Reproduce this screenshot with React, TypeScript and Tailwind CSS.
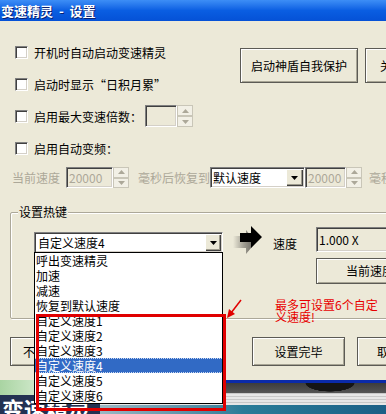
import React from 'react';

const sunken =
  'border border-t-[#808080] border-l-[#808080] border-b-white border-r-white shadow-[inset_1px_1px_0_#404040,inset_-1px_-1px_0_#d4d0c8]';
const raised =
  'bg-[#ECE9D8] shadow-[inset_1px_1px_0_#ffffff,inset_-1px_-1px_0_#404040,inset_-2px_-2px_0_#9d9a8c]';

function Check({ label, children }: { label: string; children?: React.ReactNode }) {
  return (
    <div className="flex h-[32px] items-center ml-[5px]">
      <span className={`h-[13px] w-[13px] shrink-0 bg-white ${sunken}`} />
      <span className="ml-[6px] text-[12px] leading-[15px] whitespace-nowrap">{label}</span>
      {children}
    </div>
  );
}

function Tri({ up, grey }: { up?: boolean; grey?: boolean }) {
  return (
    <svg width="7" height="4" viewBox="0 0 7 4">
      <polygon points={up ? '3.5,0 7,4 0,4' : '0,0 7,0 3.5,4'} fill={grey ? '#aca899' : '#000'} />
    </svg>
  );
}

function Spin() {
  return (
    <div className="flex h-full w-[16px] flex-col">
      <div className="flex flex-1 items-center justify-center border border-[#c9c6b8] bg-[#f2f0e6]">
        <Tri up grey />
      </div>
      <div className="flex flex-1 items-center justify-center border border-[#c9c6b8] bg-[#f2f0e6]">
        <Tri grey />
      </div>
    </div>
  );
}

function DropBtn({ w }: { w: string }) {
  return (
    <div className={`flex h-full ${w} items-center justify-center ${raised}`}>
      <Tri />
    </div>
  );
}

function Button({ text, cls }: { text: string; cls: string }) {
  return (
    <div
      className={`flex items-center justify-center border border-[#5c5b55] bg-[#ECE9D8] shadow-[inset_1px_1px_0_#ffffff,inset_-1px_-1px_0_#a8a595] text-[12px] whitespace-nowrap ${cls}`}
    >
      {text}
    </div>
  );
}

const items = ['呼出变速精灵', '加速', '减速', '恢复到默认速度', '自定义速度1', '自定义速度2', '自定义速度3', '自定义速度4', '自定义速度5', '自定义速度6'];

export default function App() {
  return (
    <div className="relative h-[414px] w-[386px] overflow-hidden bg-[#ECE9D8] font-['Noto_Sans_CJK_SC','Noto_Sans',sans-serif] text-black">
      {/* title bar */}
      <div className="flex h-[21px] w-[460px] items-center bg-gradient-to-b from-[#3d8ef6] via-[#0a5ee2] to-[#0551d6] pl-[1px]">
        <span className="whitespace-pre text-[13px] font-bold leading-[15px] text-white [text-shadow:1px_1px_0_#0a1e6e]">变速精灵  -  设置</span>
      </div>

      {/* window body */}
      <div className="flex h-[359px] w-[460px] flex-col pl-[10px] pt-[15px]">
        <div className="flex">
          <div className="flex w-[230px] flex-col">
            <Check label="开机时自动启动变速精灵" />
            <Check label="启动时显示“日积月累”" />
            <Check label="启用最大变速倍数：">
              <div className="ml-[3px] flex h-[22px]">
                <div className={`w-[32px] bg-[#ECE9D8] ${sunken}`} />
                <Spin />
              </div>
            </Check>
          </div>
          <div className="flex gap-[7px] pt-[12px]">
            <Button text="启动神盾自我保护" cls="h-[35px] w-[118px]" />
            <Button text="关于" cls="h-[35px] w-[60px] justify-start pl-[14px]" />
          </div>
        </div>
        <Check label="启用自动变频：" />

        {/* auto speed row (disabled) */}
        <div className="ml-[2px] mt-[3px] flex h-[21px] items-center text-[12px] text-[#aca899] whitespace-nowrap">
          <span>当前速度</span>
          <div className="ml-[6px] flex h-full">
            <div className={`flex w-[47px] items-center pl-[2px] bg-[#ECE9D8] ${sunken}`}>20000</div>
            <Spin />
          </div>
          <span className="ml-[9px]">毫秒后恢复到</span>
          <div className={`flex h-full w-[95px] items-center bg-white pl-[2px] pr-[1px] text-black ${sunken}`}>
            <span className="flex-1">默认速度</span>
            <div className="h-[17px]">
              <DropBtn w="w-[17px]" />
            </div>
          </div>
          <div className="flex h-full">
            <div className={`flex w-[41px] items-center pl-[2px] bg-[#ECE9D8] ${sunken}`}>20000</div>
            <Spin />
          </div>
          <span className="ml-[7px]">毫秒后</span>
        </div>

        {/* hotkey group */}
        <div className="relative mt-[24px] h-[107px] w-[440px] rounded-[2px] border border-[#aca899] shadow-[inset_1px_1px_0_#fff,1px_1px_0_#fff]">
          <span className="absolute -top-[9px] left-[7px] bg-[#ECE9D8] px-[1px] text-[12px] leading-[16px]">设置热键</span>
          <div className="flex pl-[23px]">
            <div className={`mt-[19px] flex h-[21px] w-[189px] items-center bg-white pl-[3px] pr-[1px] text-[12px] ${sunken}`}>
              <span className="flex-1">自定义速度4</span>
              <div className="h-[17px]">
                <DropBtn w="w-[16px]" />
              </div>
            </div>
            <svg className="ml-[10px] mt-[12px]" width="30" height="31" viewBox="0 0 30 31">
              <defs>
                <linearGradient id="sh" x1="0" x2="1" y1="0" y2="0">
                  <stop offset="0" stopColor="#ECE9D8" />
                  <stop offset="0.45" stopColor="#a3a095" />
                  <stop offset="1" stopColor="#5f5d57" />
                </linearGradient>
              </defs>
              <polygon points="0,11 13,11 13,5 23,17 13,29 13,23 0,23" fill="url(#sh)" />
              <polygon points="7,8 18,8 18,1 29,12 18,23 18,17 7,17" fill="#000" />
            </svg>
            <span className="ml-[10px] mt-[23px] text-[12px] leading-[15px]">速度</span>
            <div className="ml-[19px] mt-[14px] flex flex-col gap-[6px]">
              <div className={`flex h-[25px] w-[110px] items-center pl-[2px] text-[12px] bg-[#ECE9D8] ${sunken}`}>1.000 X</div>
              <Button text="当前速度" cls="h-[26px] w-[108px]" />
            </div>
          </div>
        </div>

        {/* bottom buttons */}
        <div className="mt-[18px] flex">
          <Button text="不保存设置" cls="h-[29px] w-[93px] justify-start pl-[12px]" />
          <Button text="设置完毕" cls="ml-[149px] h-[29px] w-[93px]" />
          <Button text="取消" cls="ml-[12px] h-[29px] w-[64px]" />
        </div>
      </div>

      {/* desktop behind the window */}
      <div className="flex h-[34px]">
        <div className="flex w-[100px] flex-col">
          <div className="h-[15px] bg-gradient-to-r from-[#a9d4a2] via-[#dcefd8] to-[#eef3ee] pl-[36px] text-[8px] font-bold leading-[12px] text-[#3a5a6a]">ow.m</div>
          <div className="flex-1 overflow-hidden bg-[#233252] pl-[2px] text-[22px] font-bold leading-[26px] text-white">变速精灵</div>
        </div>
        <div className="flex flex-1 flex-col">
          <div className="h-[3px] bg-[#0a2aa8]" />
          <div className="h-[10px] bg-[radial-gradient(ellipse_40px_14px_at_230px_0px,#151515_60%,transparent_62%),linear-gradient(#3c3c3c,#555)]" />
          <div className="h-[12px] bg-[repeating-linear-gradient(#c8c8c8_0px,#c8c8c8_1px,#e6e6e6_1px,#e6e6e6_3px)]" />
          <div className="flex-1 bg-gradient-to-r from-[#9ab8c4] via-[#2a7c98] to-[#1b5f86]" />
        </div>
      </div>

      {/* open dropdown list */}
      <div className="absolute left-[34px] top-[252px] w-[189px] border border-black bg-white">
        {items.map((t, i) => (
          <div
            key={t}
            className={
              i === 7
                ? 'h-[15px] border-y border-dotted border-[#c9d8f2] bg-[#316AC5] pl-[1px] text-[12px] leading-[13px] text-white'
                : 'h-[15px] pl-[1px] text-[12px] leading-[15px]'
            }
          >
            {t}
          </div>
        ))}
      </div>

      {/* red annotation */}
      <div className="absolute left-[36px] top-[314px] h-[97px] w-[190px] border-[3px] border-[#e00000]" />
      <svg className="absolute left-[226px] top-[299px]" width="17" height="20" viewBox="0 0 17 20">
        <line x1="15" y1="1" x2="5" y2="14" stroke="#e00000" strokeWidth="1.5" />
        <polygon points="1,19 3,10 9,15" fill="#e00000" />
      </svg>
      <div className="absolute left-[275px] top-[299px] text-[12px] leading-[12px] text-[#e80000]">
        最多可设置6个自定
        <br />
        义速度!
      </div>
    </div>
  );
}
